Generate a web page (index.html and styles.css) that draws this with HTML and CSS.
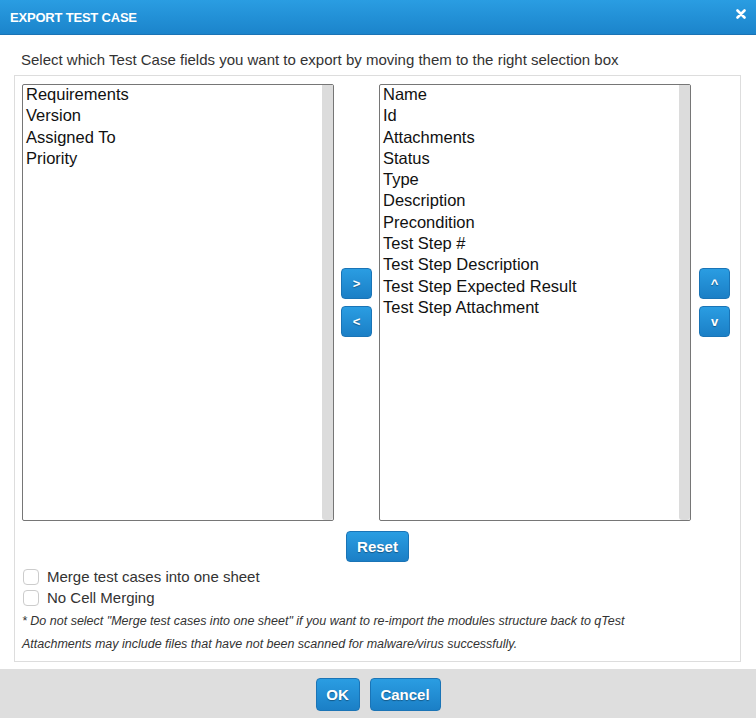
FILE: index.html
```html
<!DOCTYPE html>
<html lang="en">
<head>
  <meta charset="UTF-8">
  <title>Export Test Case</title>
  <link rel="stylesheet" href="styles.css">
</head>
<body>
  <div class="modal">
    <div class="modal-header">
      <span class="modal-title">EXPORT TEST CASE</span>
      <svg class="close" width="10" height="10" viewBox="0 0 10 10">
        <path d="M1.5 1.5 L8.5 8.5 M8.5 1.5 L1.5 8.5" stroke="#fff" stroke-width="2.6" stroke-linecap="round"/>
      </svg>
    </div>

    <div class="modal-body">
      <p class="intro">Select which Test Case fields you want to export by moving them to the right selection box</p>

      <div class="panel">
        <div class="pickers">
          <div class="listbox">
            <div class="items">
              <div>Requirements</div>
              <div>Version</div>
              <div>Assigned To</div>
              <div>Priority</div>
            </div>
            <div class="track"></div>
          </div>

          <div class="btn-col">
            <button class="btn btn-sq">&gt;</button>
            <button class="btn btn-sq">&lt;</button>
          </div>

          <div class="listbox">
            <div class="items">
              <div>Name</div>
              <div>Id</div>
              <div>Attachments</div>
              <div>Status</div>
              <div>Type</div>
              <div>Description</div>
              <div>Precondition</div>
              <div>Test Step #</div>
              <div>Test Step Description</div>
              <div>Test Step Expected Result</div>
              <div>Test Step Attachment</div>
            </div>
            <div class="track"></div>
          </div>

          <div class="btn-col">
            <button class="btn btn-sq">^</button>
            <button class="btn btn-sq">v</button>
          </div>
        </div>

        <div class="reset-row">
          <button class="btn btn-reset">Reset</button>
        </div>

        <label class="check"><span class="box"></span>Merge test cases into one sheet</label>
        <label class="check"><span class="box"></span>No Cell Merging</label>

        <p class="note">* Do not select "Merge test cases into one sheet" if you want to re-import the modules structure back to qTest</p>
        <p class="note">Attachments may include files that have not been scanned for malware/virus successfully.</p>
      </div>
    </div>

    <div class="modal-footer">
      <button class="btn btn-ok">OK</button>
      <button class="btn btn-cancel">Cancel</button>
    </div>
  </div>
</body>
</html>
```

FILE: styles.css
```css
body {
  margin: 0;
  font-family: "Liberation Sans", Arial, sans-serif;
  background: #fff;
  color: #333;
}
.modal {
  width: 756px;
  height: 718px;
  display: flex;
  flex-direction: column;
}
.modal-header {
  height: 34px;
  flex-shrink: 0;
  display: flex;
  align-items: center;
  justify-content: space-between;
  padding: 0 10px 0 10px;
  background: linear-gradient(#2a9de2, #1b84cb);
  border-bottom: 1px solid #1a73b5;
  color: #fff;
}
.modal-title {
  font-size: 13px;
  font-weight: bold;
  letter-spacing: -0.2px;
}
.close {
  margin-top: -7px;
}
.modal-body {
  padding: 16px 15px 0 14px;
}
.intro {
  margin: 0 0 7px 7px;
  font-size: 15px;
  line-height: 17px;
}
.panel {
  border: 1px solid #ddd;
  padding: 8px 7px 5px 7px;
}
.pickers {
  display: flex;
  align-items: center;
}
.listbox {
  width: 312px;
  height: 437px;
  box-sizing: border-box;
  border: 1px solid #767676;
  border-radius: 2px;
  display: flex;
  color: #111;
}
.items {
  flex: 1;
  padding: 0 3px;
  margin-top: -1px;
  font-size: 16.5px;
  line-height: 21.3px;
}
.track {
  width: 11px;
  background: #dcdcdc;
  border-radius: 0 0 3px 3px;
}
.btn-col {
  display: flex;
  flex-direction: column;
  gap: 7px;
  margin: 0 7px;
}
.btn-col:last-child {
  margin: 0 0 0 8px;
}
.btn {
  font-family: "Liberation Sans", Arial, sans-serif;
  background: linear-gradient(#2a9de2, #1b7fc6);
  border: 1px solid #1a74b6;
  border-radius: 4px;
  color: #fff;
  font-weight: bold;
  font-size: 14px;
  text-shadow: 0 1px 1px rgba(0, 0, 0, 0.35);
  cursor: pointer;
  padding: 0;
}
.btn-sq {
  width: 31px;
  height: 31px;
  font-size: 13px;
}
.reset-row {
  display: flex;
  justify-content: center;
  margin-top: 10px;
}
.btn-reset {
  width: 63px;
  height: 31px;
  font-size: 15px;
}
.check {
  display: flex;
  align-items: center;
  font-size: 15px;
  height: 21px;
  margin-left: 1px;
}
.check:first-of-type {
  margin-top: 4px;
}
.box {
  width: 14px;
  height: 14px;
  border: 1px solid #ccc;
  border-radius: 4px;
  margin-right: 8px;
}
.note {
  margin: 0;
  font-size: 12.5px;
  font-style: italic;
  line-height: 23px;
}
.note:first-of-type {
  margin-top: 2px;
}
.modal-footer {
  flex: 1;
  margin-top: 7px;
  background: #dedede;
  display: flex;
  justify-content: center;
  align-items: flex-start;
  gap: 10px;
  padding-top: 9px;
}
.btn-ok {
  width: 44px;
  height: 33px;
  font-size: 15px;
}
.btn-cancel {
  width: 71px;
  height: 33px;
  font-size: 15px;
}
```
